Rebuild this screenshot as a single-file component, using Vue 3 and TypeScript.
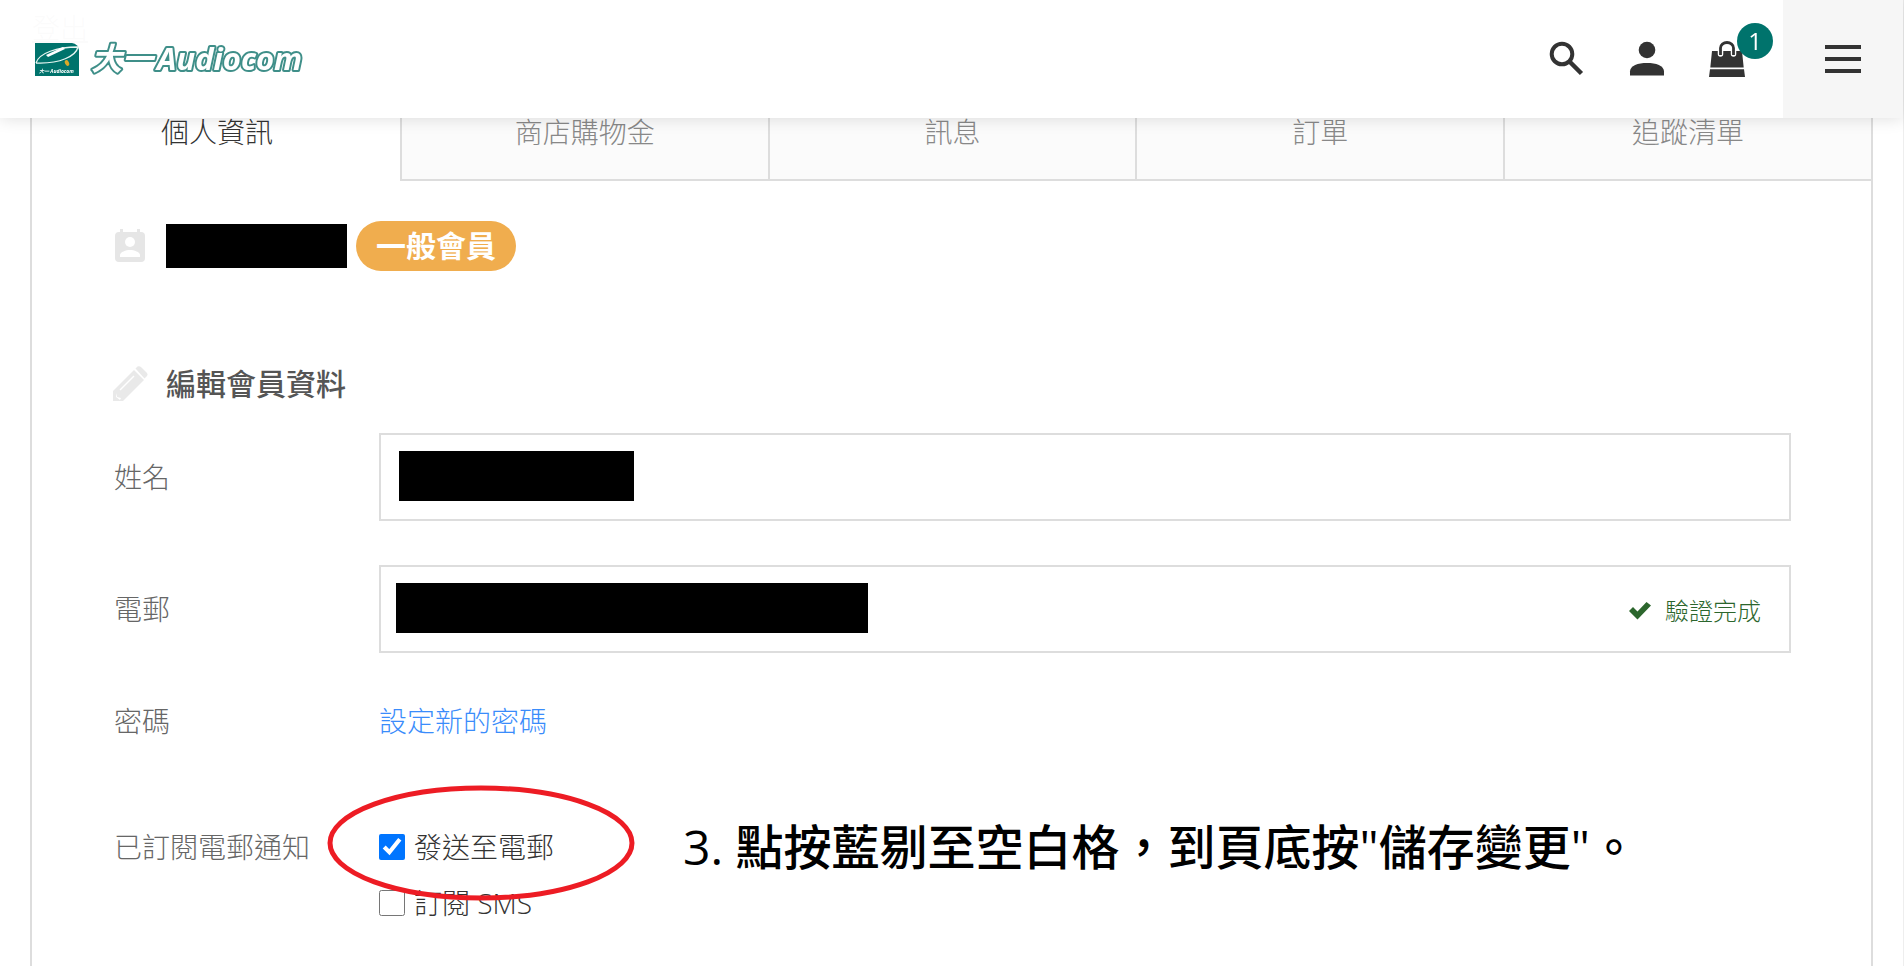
<script setup lang="ts">
import { ref } from 'vue'

const tabs = ['個人資訊', '商店購物金', '訊息', '訂單', '追蹤清單']
const active = ref(0)
const cartCount = ref(1)
const mailOn = ref(true)
const smsOn = ref(false)
</script>

<template>
  <div class="page" lang="zh-Hant">
    <header class="topbar">
      <a class="brand" href="#" aria-label="大一 Audiocom">
        <svg width="296" height="40" viewBox="0 0 296 40">
          <path d="M0 4h37q6 1 7 7v26H0z" fill="#00736c" />
          <path d="M1 24C4 14 22 8 43 8C41 17 25 25 1 24" fill="none" stroke="#e8f6f2" stroke-width="1.3" />
          <path d="M11 16L28 8L30 10L13 18z" fill="#fff" />
          <ellipse cx="32" cy="24" rx="2" ry="3" fill="#d9a827" transform="rotate(-25 32 24)" />
          <text x="4" y="34" class="brand-mini">大一 Audiocom</text>
          <text x="56" y="31" class="brand-cjk">大一</text>
          <text x="122" y="31" class="brand-latin">Audiocom</text>
        </svg>
      </a>
      <nav class="tools">
        <button class="tool" type="button" aria-label="搜尋">
          <svg width="36" height="36" viewBox="0 0 36 36">
            <circle cx="13" cy="13" r="10.3" fill="none" stroke="#333" stroke-width="4" />
            <path d="M20.500 20.500L32.500 32.500" stroke="#333" stroke-width="4.500" />
          </svg>
        </button>
        <button class="tool" type="button" aria-label="會員">
          <svg width="36" height="36" viewBox="0 0 36 36">
            <circle cx="18" cy="9" r="8.300" fill="#333" />
            <path d="M1 34.500v-4C1 24.500 9 22 18 22s17 2.500 17 8.500v4z" fill="#333" />
          </svg>
        </button>
        <button class="tool cart" type="button" aria-label="購物車">
          <svg width="36" height="36" viewBox="0 0 36 36">
            <path d="M3 10H33L34.700 26.500H1.300zM1 28.300H35L36 36H0z" fill="#333" />
            <path d="M11.500 13V7a6.500 6 0 0 1 13 0v6" fill="none" stroke="#fff" stroke-width="5.500" stroke-linecap="round" />
            <path d="M11.500 14V7a6.500 5.500 0 0 1 13 0v7" fill="none" stroke="#333" stroke-width="2.800" />
          </svg>
          <span class="count">{{ cartCount }}</span>
        </button>
      </nav>
      <button class="menu" type="button" aria-label="選單"><i></i><i></i><i></i></button>
    </header>

    <div class="account-bar"><a href="#">登出</a></div>

    <main class="panel">
      <nav class="tabs">
        <button v-for="(t, i) in tabs" :key="t" type="button" class="tab" :class="{ on: i === active }" @click="active = i">{{ t }}</button>
      </nav>

      <div class="content">
        <div class="member">
          <svg class="lead" width="36" height="36" viewBox="0 0 36 36">
            <path d="M8 1h3v3h14V1h3v3h1a4 4 0 0 1 4 4v22a4 4 0 0 1-4 4H7a4 4 0 0 1-4-4V8a4 4 0 0 1 4-4h1z" fill="#e6e6e6" />
            <circle cx="18" cy="14" r="5" fill="#fff" />
            <path d="M8 29v-2c0-3 6-5 10-5s10 2 10 5v2z" fill="#fff" />
          </svg>
          <span class="redacted name-tag"></span>
          <span class="level">一般會員</span>
        </div>

        <h2 class="section">
          <svg class="lead" width="36" height="36" viewBox="0 0 36 36">
            <path d="M1 35V25L22 4L32 14L11 35z" fill="#e9e9e9" />
            <path d="M23.500 2.500l2-2q2-1 4 1l5 5q2 2 0 4l-2 2z" fill="#e9e9e9" />
            <path d="M8 24L22 10" stroke="#fff" stroke-width="1.500" />
            <path d="M4 27l1 4 4 1-1 2-4-3z" fill="#fff" />
          </svg>
          <span>編輯會員資料</span>
        </h2>

        <form class="form" @submit.prevent>
          <div class="row">
            <label for="name">姓名</label>
            <div class="box"><input id="name" type="text" /><span class="redacted mask-name"></span></div>
          </div>
          <div class="row">
            <label for="mail">電郵</label>
            <div class="box">
              <input id="mail" type="email" /><span class="redacted mask-mail"></span>
              <span class="verified">
                <svg width="22" height="20" viewBox="0 0 22 20"><path d="M0 10L4 6L8.500 10.500L17.500 1L22 4.500L8.500 18.500z" fill="#2c662d" /></svg>
                驗證完成
              </span>
            </div>
          </div>
          <div class="row link-row">
            <span class="label">密碼</span>
            <a class="pw" href="#">設定新的密碼</a>
          </div>
          <div class="row notify">
            <span class="label">已訂閱電郵通知</span>
            <div class="checks">
              <label class="check"><input v-model="mailOn" type="checkbox" />發送至電郵</label>
              <label class="check"><input v-model="smsOn" type="checkbox" />訂閱 SMS</label>
              <svg class="ring" width="308" height="116" viewBox="0 0 308 116"><ellipse cx="154" cy="58" rx="151" ry="55" fill="none" stroke="#ed1c24" stroke-width="5" /></svg>
              <p class="step">3. 點按藍剔至空白格，到頁底按"儲存變更"。</p>
            </div>
          </div>
        </form>
      </div>
    </main>
  </div>
</template>

<style>
body { margin: 0; background: #fff; }
</style>

<style scoped>
* { box-sizing: border-box; }
.page {
  display: flex; flex-direction: column; height: 100vh; overflow: hidden;
  border-right: 1px solid #eee;
  font-family: "Open Sans", "Noto Sans CJK TC", sans-serif;
  font-size: 28px; line-height: 40px; font-weight: 300; color: #333;
}
button, input { font: inherit; color: inherit; border: 0; padding: 0; margin: 0; background: none; }
.topbar {
  position: fixed; z-index: 5; top: 0; left: 0; right: 1px; height: 118px;
  display: flex; align-items: center; background: rgba(255, 255, 255, 0.98);
  box-shadow: 0 0 16px rgba(0, 0, 0, 0.14);
}
.brand { margin-left: 35px; display: flex; }
.brand-cjk, .brand-latin {
  font-style: italic; font-weight: 700; fill: #fff; stroke: #3f8f89; stroke-width: 4px; stroke-linejoin: round; paint-order: stroke;
}
.brand-cjk { font-size: 31px; font-family: "Noto Sans CJK TC", sans-serif; }
.brand-latin { font-size: 31px; font-family: "Open Sans", sans-serif; }
.brand-mini { font-size: 5px; font-style: italic; font-weight: 700; fill: #fff; }
.tools { margin-left: auto; display: flex; gap: 44px; margin-right: 38px; }
.tool { position: relative; display: flex; cursor: pointer; }
.count {
  position: absolute; left: 28px; top: -18px; width: 36px; height: 36px; border-radius: 50%;
  background: #00736c; color: #fff; font-size: 24px; line-height: 36px; font-weight: 400; text-align: center;
}
.menu {
  width: 120px; height: 100%; background: #f6f6f6; display: flex; flex-direction: column;
  align-items: center; justify-content: center; gap: 8px; cursor: pointer;
}
.menu i { width: 36px; height: 4px; background: #333; }
.account-bar { height: 82px; flex: none; padding: 8px 32px; }
.account-bar a { color: #333; }
.panel { flex: 1; margin: 0 30px; border: 2px solid #ddd; border-bottom: 0; }
.tabs { display: grid; grid-template-columns: repeat(5, 1fr); }
.tab { height: 97px; border-left: 2px solid #ddd; border-bottom: 2px solid #ddd; background: #fbfbfb; color: #888; cursor: pointer; }
.tab.on { border-color: transparent; background: #fff; color: #333; }
.content { padding: 40px 80px 0; }
.member, .section { display: flex; align-items: center; height: 50px; }
.lead { flex: none; margin-right: 18px; }
.redacted { background: #000; }
.name-tag { width: 181px; height: 44px; }
.level {
  margin-left: 9px; height: 50px; padding: 0 20px; border-radius: 25px; background: #f0ad4e;
  color: #fff; font-size: 30px; line-height: 50px; font-weight: 700;
}
.section { margin: 88px 0 24px; font-size: 30px; font-weight: 500; color: #555; }
.form { padding-left: 2px; }
.row { display: grid; grid-template-columns: 265px 1fr; align-items: center; margin-bottom: 44px; color: #666; }
.box { position: relative; height: 88px; }
.box input { width: 100%; height: 100%; border: 2px solid #ddd; padding: 0 20px; }
.mask-name, .mask-mail { position: absolute; height: 50px; top: 18px; }
.mask-name { left: 20px; width: 235px; }
.mask-mail { left: 17px; width: 472px; }
.verified {
  position: absolute; right: 30px; top: 26px; display: flex; align-items: center; gap: 14px;
  font-size: 24px; color: #2c662d;
}
.link-row { padding-top: 4px; margin-bottom: 86px; }
.pw { color: #3a8cfb; text-decoration: none; }
.notify { align-items: start; }
.checks { position: relative; display: grid; gap: 16px; color: #333; }
.check { display: flex; align-items: center; gap: 9px; }
.check input { width: 26px; height: 26px; accent-color: #0075ff; }
.ring { position: absolute; left: -52px; top: -42px; pointer-events: none; }
.step {
  position: absolute; left: 304px; top: -12px; margin: 0; white-space: nowrap;
  font-size: 48px; line-height: 64px; font-weight: 500; color: #000;
}
</style>
